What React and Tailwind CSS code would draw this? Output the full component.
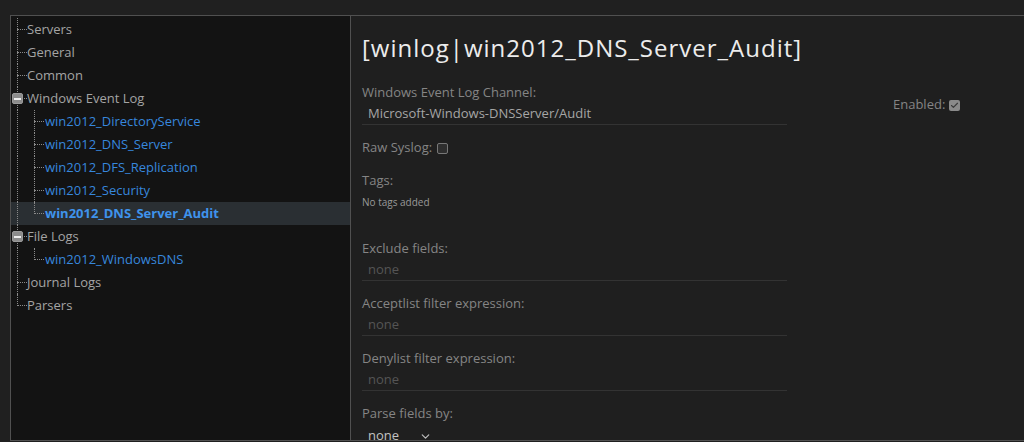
import { ChevronDown, Check } from 'lucide-react'

const tree = [
  { label: 'Servers' },
  { label: 'General' },
  { label: 'Common' },
  {
    label: 'Windows Event Log',
    open: true,
    children: [
      { label: 'win2012_DirectoryService' },
      { label: 'win2012_DNS_Server' },
      { label: 'win2012_DFS_Replication' },
      { label: 'win2012_Security' },
      { label: 'win2012_DNS_Server_Audit', selected: true },
    ],
  },
  { label: 'File Logs', open: true, children: [{ label: 'win2012_WindowsDNS' }] },
  { label: 'Journal Logs' },
  { label: 'Parsers' },
]

const TreeRow = ({ label, depth, last, ancestorsLast, open, selected }) => (
  <div className={`flex h-[23px] items-stretch ${selected ? 'bg-[#2a2f33]' : ''}`}>
    <div className="w-[6px] shrink-0" />
    {ancestorsLast.map((isLast, i) => (
      <div key={i} className="w-[17px] shrink-0">
        {!isLast && <div className="h-full border-l border-dotted border-[#8a8a8a]" />}
      </div>
    ))}
    <div className="relative w-[10px] shrink-0">
      <div
        className={`absolute left-0 top-0 border-l border-dotted border-[#8a8a8a] ${last ? 'h-[12px]' : 'h-full'}`}
      />
      <div className="absolute left-0 top-[11px] w-[10px] border-t border-dotted border-[#8a8a8a]" />
      {open && (
        <div className="absolute left-[-5px] top-[6px] flex h-[11px] w-[11px] items-center justify-center rounded-[2px] border border-[#9a9a9a] bg-[#8c8c8c]">
          <div className="h-[2px] w-[7px] bg-[#eeeeee]" />
        </div>
      )}
    </div>
    <div
      className={`flex items-center whitespace-nowrap text-[13px] ${depth > 0 ? (selected ? 'font-bold text-[#3f93ec]' : 'text-[#3787dd]') : 'text-[#a4a4a4]'} ${depth > 0 ? 'pl-[1px]' : ''}`}
    >
      {label}
    </div>
  </div>
)

const Field = ({ label, value }) => (
  <div className="mb-[13px]">
    <div className="h-[18px] text-[13px] leading-[18px] text-[#858585]">{label}</div>
    <div className="h-[24px] border-b border-[#333333] pt-[3px] pl-[6px] text-[13px] leading-[18px] text-[#555555]">
      {value}
    </div>
  </div>
)

export default function App() {
  const rows = []
  tree.forEach((node, i) => {
    const last = i === tree.length - 1
    rows.push(<TreeRow key={node.label} label={node.label} depth={0} last={last} ancestorsLast={[]} open={node.open} />)
    if (node.children) {
      node.children.forEach((c, j) => {
        rows.push(
          <TreeRow
            key={c.label}
            label={c.label}
            depth={1}
            last={j === node.children.length - 1}
            ancestorsLast={[last]}
            selected={c.selected}
          />
        )
      })
    }
  })

  return (
    <div className="flex h-[442px] w-[1024px] flex-col overflow-hidden bg-[#202020] pt-[15px] pl-[10px] font-['Open_Sans',sans-serif]">
      <div className="flex h-[426px] border-t border-b border-l border-[#505050]">
        <div className="w-[340px] shrink-0 border-r border-[#505050] bg-[#131313] pt-[2px]">{rows}</div>
        <div className="flex flex-1 bg-[#1f1f1f] pl-[11px]">
          <div className="w-[425px] shrink-0">
            <h1 className="mt-[17px] h-[30px] whitespace-nowrap text-[24px] leading-[30px] tracking-[1px] text-[#ececec]">
              [winlog|win2012_DNS_Server_Audit]
            </h1>
            <div className="mt-[20px] h-[18px] text-[13px] leading-[18px] text-[#858585]">Windows Event Log Channel:</div>
            <div className="h-[24px] border-b border-[#333333] pt-[3px] pl-[6px] text-[13px] leading-[18px] text-[#a6a6a6]">
              Microsoft-Windows-DNSServer/Audit
            </div>
            <div className="mt-[14px] flex h-[18px] items-center gap-[5px] text-[13px] text-[#858585]">
              Raw Syslog:
              <span className="h-[11px] w-[11px] rounded-[2px] border border-[#777777] bg-[#2e2e2e]" />
            </div>
            <div className="mt-[14px] h-[18px] text-[13px] leading-[18px] text-[#858585]">Tags:</div>
            <div className="mt-[6px] h-[14px] text-[10px] leading-[14px] text-[#999999]">No tags added</div>
            <div className="mt-[30px]">
              <Field label="Exclude fields:" value="none" />
              <Field label="Acceptlist filter expression:" value="none" />
              <Field label="Denylist filter expression:" value="none" />
            </div>
            <div className="h-[18px] text-[13px] leading-[18px] text-[#858585]">Parse fields by:</div>
            <div className="flex h-[26px] items-center gap-[20px] pt-[2px] pl-[6px] text-[13px] text-[#c2c2c2]">
              none
              <ChevronDown size={13} strokeWidth={2.2} className="text-[#bdbdbd]" />
            </div>
          </div>
          <div className="ml-[106px] mt-[80px] flex h-[18px] items-center gap-[4px] text-[13px] text-[#858585]">
            Enabled:
            <span className="flex h-[11px] w-[11px] items-center justify-center rounded-[2px] bg-[#8a8a8a]">
              <Check size={9} strokeWidth={3} className="text-[#3a3a3a]" />
            </span>
          </div>
        </div>
      </div>
    </div>
  )
}
